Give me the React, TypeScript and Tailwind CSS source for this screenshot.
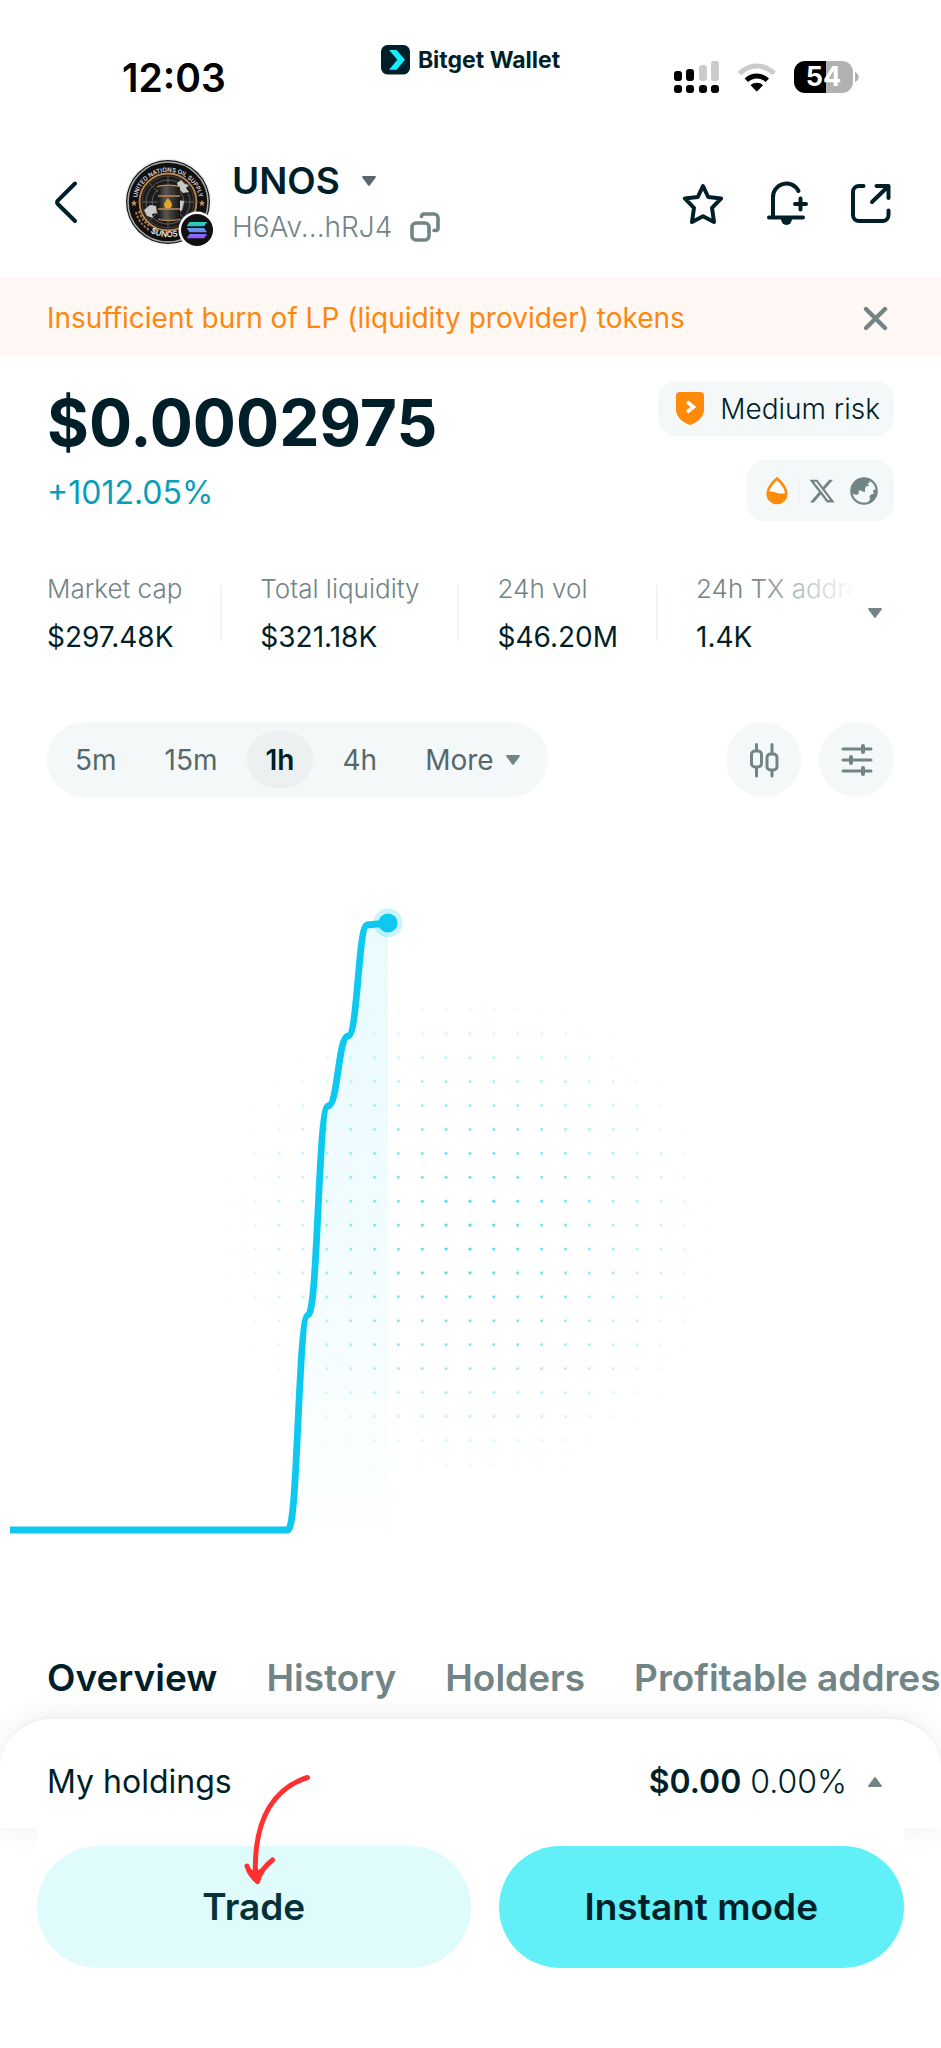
import { useState } from 'react';
import { FaXTwitter } from 'react-icons/fa6';

const stats = [
  { label: 'Market cap', value: '$297.48K' },
  { label: 'Total liquidity', value: '$321.18K' },
  { label: '24h vol', value: '$46.20M' },
  { label: '24h TX addresses', value: '1.4K' },
];

const timeframes = ['5m', '15m', '1h', '4h'];
const tabs = ['Overview', 'History', 'Holders', 'Profitable addresses'];

const Caret = ({ up = false, className = '' }: { up?: boolean; className?: string }) => (
  <svg
    width="14"
    height="10"
    viewBox="0 0 14 10"
    className={`shrink-0 fill-current ${up ? 'rotate-180' : ''} ${className}`}
  >
    <path d="M1 0h12c.8 0 1.200.8.7 1.400L7.800 9.400c-.4.600-1.200.600-1.600 0L.3 1.400C-.2.8.2 0 1 0z" />
  </svg>
);

const StatusBar = () => (
  <div className="grid h-[125px] grid-cols-[1fr_auto_1fr] items-start">
    <time className="pt-[54px] pl-[122px] text-[39px] leading-[48px] font-semibold text-black">12:03</time>
    <div className="flex items-center gap-2 pt-[45px]">
      <svg width="29" height="30" viewBox="0 0 29 30">
        <rect width="29" height="29.500" rx="6.500" fill="#001f29" />
        <path d="M8 5h7.500l8.500 9.800-8.500 9.900H8l8.400-9.900z" fill="#0ff0ff" />
      </svg>
      <span className="text-[23px] leading-[30px] font-bold text-[#001f29]">Bitget Wallet</span>
    </div>
    <div className="flex items-center justify-end gap-[17px] pt-[60px] pr-[82px]">
      <svg width="46" height="34" viewBox="0 0 46 34">
        <g fill="#000">
          <rect x="0" y="11" width="8" height="10" rx="3" />
          <rect x="12" y="9" width="8" height="12" rx="3" />
          <rect x="0" y="25" width="8" height="8" rx="3" />
          <rect x="12" y="25" width="8" height="8" rx="3" />
          <rect x="25" y="25" width="8" height="8" rx="3" />
          <rect x="37" y="25" width="8" height="8" rx="3" />
        </g>
        <g fill="#cbcbcb">
          <rect x="25" y="5" width="8" height="16" rx="3" />
          <rect x="37" y="1" width="8" height="20" rx="3" />
        </g>
      </svg>
      <svg width="40" height="32" viewBox="0 0 40 32" fill="none">
        <path d="M2.500 12.500C7.500 7.600 13.500 5 19.800 5s12.300 2.600 17.300 7.500" stroke="#cbcbcb" strokeWidth="5" />
        <path d="M9.300 19.300c3-2.900 6.600-4.400 10.500-4.400s7.500 1.500 10.500 4.400" stroke="#000" strokeWidth="5" />
        <path d="M13.600 24.200c3.600-3.200 8.800-3.200 12.400 0l-5.500 5.900c-.4.400-1 .4-1.400 0z" fill="#000" />
      </svg>
      <div className="flex items-center gap-[2px]">
        <div className="flex h-8 w-[59px] items-center justify-center rounded-[11px] bg-linear-to-r from-black from-55% to-[#b1b1b1] to-55% text-[27px] leading-8 font-bold text-white">
          54
        </div>
        <svg width="4" height="10" viewBox="0 0 4 10">
          <path d="M0 0c5 2 5 8 0 10z" fill="#b1b1b1" />
        </svg>
      </div>
    </div>
  </div>
);

const TokenLogo = () => (
  <svg width="94" height="90" viewBox="0 0 94 90" role="img" aria-label="UNOS">
    <defs>
      <path id="ring-top" d="M 13 51 A 31.500 31.500 0 1 1 75 51" />
      <path id="ring-bottom" d="M 20 70 A 36 36 0 0 0 68 70" />
      <linearGradient id="barrel" x1="0" x2="1" y1="0" y2="0">
        <stop offset="0" stopColor="#171717" />
        <stop offset=".35" stopColor="#5b5750" />
        <stop offset="1" stopColor="#161514" />
      </linearGradient>
      <linearGradient id="sol" gradientUnits="userSpaceOnUse" x1="73" x2="73" y1="81" y2="64">
        <stop offset="0" stopColor="#9a4dff" />
        <stop offset=".5" stopColor="#6d8df5" />
        <stop offset="1" stopColor="#18dcb4" />
      </linearGradient>
    </defs>
    <circle cx="44" cy="44" r="43.500" fill="#eef3f3" />
    <circle cx="44" cy="44" r="42" fill="#171717" />
    <circle cx="44" cy="44" r="40" fill="#101010" stroke="#a8a8a8" strokeWidth="1.500" />
    <circle cx="44" cy="44" r="28.500" fill="#1c1c1d" stroke="#b98a57" strokeWidth="1.800" />
    <circle cx="44" cy="44" r="26" fill="none" stroke="#4c3a28" strokeWidth="1" />
    <g stroke="#6c6c6c" strokeWidth=".8" fill="none">
      <circle cx="44" cy="44" r="22" />
      <circle cx="44" cy="44" r="16" />
      <path d="M44 18v52M18 44h52M25 25l38 38M63 25L25 63" />
    </g>
    <path d="M53 25l4-3 4 4 4 1-3 3 3 4-6 1-4-4zM20 52l6-5 6 1 1 7-5 1 1 4-6-2zM54 42l6 1-2 9-5 3z" fill="#c9c9c9" />
    <rect x="34" y="28" width="22" height="34" rx="2" fill="url(#barrel)" />
    <path d="M33 29c5-2.500 18-2.500 23 0M34 38h22M34 51h22M34 61c5 2 17 2 22 0" stroke="#b98a57" strokeWidth="1.300" fill="none" />
    <path d="M44 40c2 3 4 4.500 4 6.500a4 4 0 0 1-8 0c0-2 2-3.500 4-6.500z" fill="#e3a72c" />
    <path d="M12 54c2 8 6 13 13 18M15 53c2 7 6 12 12 16" stroke="#a9744b" strokeWidth="2" strokeDasharray="2.500 1.500" fill="none" />
    <path d="M10 42l1 2 2 .3-1.500 1.500.4 2.200-1.900-1-1.900 1 .4-2.200L7 44.300 9 44zM78 42l1 2 2 .3-1.500 1.500.4 2.200-1.900-1-1.900 1 .4-2.200-1.500-1.500 2-.3z" fill="#b98a57" />
    <text fill="#d9d9d9" fontSize="6" fontWeight="600">
      <textPath href="#ring-top" startOffset="50%" textAnchor="middle">UNITED NATIONS OIL SUPPLY</textPath>
    </text>
    <text fill="#e8e8e8" fontSize="8" fontWeight="600">
      <textPath href="#ring-bottom" startOffset="42%" textAnchor="middle">$UNOS</textPath>
    </text>
    <circle cx="73" cy="72" r="18.500" fill="#fff" />
    <circle cx="73" cy="72" r="16" fill="#111" />
    <g fill="url(#sol)">
      <path d="M65.500 64H83l-2.800 4.300H62.700z" />
      <path d="M62.700 70h17.500l2.800 4.300H65.500z" />
      <path d="M65.500 76H83l-2.800 4.300H62.700z" />
    </g>
  </svg>
);

const Header = () => (
  <header className="flex h-[152px] items-start pr-[50px] pl-[54px] text-[#001f29]">
    <button type="button" aria-label="Back" className="mt-[56px]">
      <svg width="24" height="43" viewBox="0 0 24 43" fill="none" stroke="currentColor" strokeWidth="4" strokeLinecap="round" strokeLinejoin="round">
        <path d="M21 2.500L3.800 19.600c-1 1-1 2.400 0 3.400L21 40" />
      </svg>
    </button>
    <div className="mt-[33px] ml-[46px]">
      <TokenLogo />
    </div>
    <div className="mt-[33px] ml-[14px]">
      <button type="button" className="flex h-[46px] items-center gap-[22px] text-[37px] leading-[46px] font-semibold">
        UNOS
        <Caret className="text-[#56686b]" />
      </button>
      <button type="button" className="flex h-[46px] items-center gap-[18px] text-[28px] leading-[46px] font-light text-[#718486]">
        H6Av...hRJ4
        <svg width="30" height="30" viewBox="0 0 30 30" fill="none" stroke="currentColor" strokeWidth="3.600" strokeLinecap="round" strokeLinejoin="round">
          <rect x="2" y="11" width="17" height="17" rx="4" />
          <path d="M11.500 4.500c0-1.500 1-2.500 2.500-2.500h10c2.200 0 4 1.800 4 4v10c0 1.500-1 2.500-2.500 2.500h-1.500" />
        </svg>
      </button>
    </div>
    <div className="mt-[55px] ml-auto flex items-center gap-[41px]">
      <button type="button" aria-label="Add to favourites">
        <svg width="44" height="46" viewBox="0 0 44 46" fill="none" stroke="currentColor" strokeWidth="4" strokeLinejoin="round">
          <path d="M22 6l5.200 11 13 1.400-9.200 9.400 2 14.200-11-5.700L11 42l2-14.200-9.200-9.400 13-1.400z" />
        </svg>
      </button>
      <button type="button" aria-label="Add price alert">
        <svg width="42" height="46" viewBox="0 0 42 46" fill="none" stroke="currentColor" strokeWidth="4" strokeLinecap="round">
          <path d="M3 37.500h34M7 37V18.500a13.500 13.500 0 0 1 25.500-7.500M34.500 18.500v11M29 24h11" />
          <path d="M15 39h11a5.500 6 0 0 1-11 0z" fill="currentColor" stroke="none" />
        </svg>
      </button>
      <button type="button" aria-label="Share">
        <svg width="42" height="46" viewBox="0 0 42 46" fill="none" stroke="currentColor" strokeWidth="4" strokeLinecap="round" strokeLinejoin="round">
          <path d="M14.500 6H10a6 6 0 0 0-6 6v23a6 6 0 0 0 6 6h23.500a6 6 0 0 0 6-6v-4.500M27.500 6h12v12M38.500 7L23 22" />
        </svg>
      </button>
    </div>
  </header>
);

const PriceSummary = () => (
  <section className="flex items-start justify-between pt-6 pr-[47px] pl-[47px]">
    <div>
      <h1 className="text-[64px] leading-[84px] font-bold text-[#001f29]">$0.0002975</h1>
      <p className="mt-1 text-[32px] leading-[48px] text-[#0a9dba]">+1012.05%</p>
    </div>
    <div className="flex flex-col items-end gap-6">
      <button type="button" className="flex h-[55px] items-center gap-4 rounded-[18px] bg-[#f4f8f9] pr-[14px] pl-[18px] text-[28px] font-light text-[#001f29]">
        <svg width="28" height="33" viewBox="0 0 28 33">
          <path d="M4 0h20a4 4 0 0 1 4 4v13.500C28 25 21.500 30.500 14 33 6.500 30.500 0 25 0 17.500V4a4 4 0 0 1 4-4z" fill="#fe8a0a" />
          <path d="M12.500 11l5 4-5 4" fill="none" stroke="#fff" strokeWidth="3.600" strokeLinecap="square" />
        </svg>
        Medium risk
      </button>
      <div className="flex h-[61px] items-center rounded-[18px] bg-[#f4f8f9] pr-4 pl-[19px] text-[#718486]">
        <button type="button" aria-label="Liquidity">
          <svg width="22" height="28" viewBox="0 0 22 28">
            <path d="M11 1.500c4.500 4 9.300 9.500 9.300 15.200a9.300 9.300 0 0 1-18.600 0C1.700 11 6.500 5.500 11 1.500z" fill="#fff" stroke="#fe8a0a" strokeWidth="2.600" />
            <path d="M1.700 15.500c4-2 6.500-.3 9.300.5s6 .7 9.300 0c.4 6-3.500 10.500-9.300 10.500S1.300 21.500 1.700 15.500z" fill="#fe8a0a" />
          </svg>
        </button>
        <span className="mr-2 ml-[10px] h-6 w-[2px] bg-[#eef2f3]" />
        <a href="#x" aria-label="X">
          <FaXTwitter className="size-7" />
        </a>
        <a href="#website" aria-label="Website" className="ml-[14px]">
          <svg width="28" height="28" viewBox="0 0 28 28">
            <circle cx="14" cy="14" r="12.700" fill="#f4f8f9" stroke="currentColor" strokeWidth="2.200" />
            <path d="M1.500 15C1 7 6.500 1 14 1c2 0 4 .3 5.500 1v4l-2 .5 1.500 2.500-3 .5-1 2v3.500l-2.500-.5-2-1.200-2 .7.500 2.500-2.500 1.500-3-1z" fill="currentColor" />
            <path d="M26.500 13l-2.500-.5-1 1.500 1 2.500-3 1-1.500 2 .5 3-2.500 3.700c5.500-.7 9.500-5.700 9-13.200z" fill="currentColor" />
          </svg>
        </a>
      </div>
    </div>
  </section>
);

const StatsRow = () => (
  <section className="mt-11 flex items-center pr-[59px] pl-[47px]">
    <div className="relative min-w-0 flex-1 overflow-hidden">
      <div className="flex items-center gap-[38px]">
        {stats.map((stat, i) => (
          <div key={stat.label} className="flex shrink-0 items-center gap-[38px]">
            {i > 0 && <span className="h-14 w-[2px] bg-[#eef3f3]" />}
            <div className="whitespace-nowrap">
              <p className="text-[26px] leading-[48px] font-light text-[#718486]">{stat.label}</p>
              <p className="text-[28px] leading-[48px] text-[#001f29]">{stat.value}</p>
            </div>
          </div>
        ))}
      </div>
      <div className="pointer-events-none absolute inset-y-0 right-0 w-[104px] bg-linear-to-r from-white/0 to-white" />
    </div>
    <button type="button" aria-label="Show all stats" className="ml-[12px] text-[#718486]">
      <Caret />
    </button>
  </section>
);

const ChartControls = () => {
  const [active, setActive] = useState('1h');

  return (
    <section className="mt-[61px] flex items-center justify-between px-[47px]">
      <div className="flex h-[75px] items-center gap-[10px] rounded-full bg-[#f4f8f9] px-[9px] text-[28px] text-[#56686b]">
        {timeframes.map((frame) => (
          <button
            key={frame}
            type="button"
            onClick={() => setActive(frame)}
            className={
              frame === active
                ? 'h-[57px] rounded-full bg-[#ecf0f1] px-[19px] font-semibold text-[#001f29]'
                : 'h-[57px] px-[19px]'
            }
          >
            {frame}
          </button>
        ))}
        <button type="button" className="flex h-[57px] items-center gap-3 px-[19px]">
          More
          <Caret className="text-[#718486]" />
        </button>
      </div>
      <div className="flex gap-[18px] text-[#718486]">
        <button type="button" aria-label="Candles" className="flex size-[75px] items-center justify-center rounded-full bg-[#f4f8f9]">
          <svg width="30" height="36" viewBox="0 0 30 36" fill="none" stroke="currentColor" strokeWidth="3" strokeLinecap="round">
            <rect x="2.500" y="9" width="10" height="16" rx="3.500" />
            <rect x="18" y="12" width="10" height="16" rx="3.500" />
            <path d="M7.500 2.500V8M7.500 26v8M23 2.500V11M23 29v5" />
          </svg>
        </button>
        <button type="button" aria-label="Chart settings" className="flex size-[75px] items-center justify-center rounded-full bg-[#f4f8f9]">
          <svg width="32" height="34" viewBox="0 0 32 34" fill="none" stroke="currentColor" strokeWidth="3" strokeLinecap="round">
            <path d="M2 6h28M2 17h28M2 28h28" />
            <path d="M22 3v6M10 14v6M22 25v6" strokeWidth="4" />
          </svg>
        </button>
      </div>
    </section>
  );
};

const LINE =
  'M10 733H288C298 733 298 519 308 518C318 518 318 310 328 309C338 309 338 240 348 239C358 238 358 130 367 128L388 126';

const dots: { x: number; y: number; o: number }[] = [];
for (let row = -11; row <= 10; row++) {
  for (let col = -10; col <= 10; col++) {
    const d = Math.hypot(col, row + 0.5) / 10.8;
    if (d < 1) dots.push({ x: 470 + col * 23.87, y: 452 + row * 23.92, o: 1 - d });
  }
}

const PriceChart = () => (
  <svg viewBox="0 0 941 827" className="block h-auto w-full" role="img" aria-label="Price chart">
    <defs>
      <linearGradient id="area" x1="0" x2="0" y1="0" y2="1">
        <stop offset="0" stopColor="#5fe3f5" stopOpacity=".14" />
        <stop offset=".5" stopColor="#5fdcf5" stopOpacity=".08" />
        <stop offset="1" stopColor="#5fdcf5" stopOpacity="0" />
      </linearGradient>
    </defs>
    <path d={`${LINE}V776H10Z`} fill="url(#area)" />
    {dots.map((dot) => (
      <circle key={`${dot.x}-${dot.y}`} cx={dot.x} cy={dot.y} r="1.600" fill="#2fdcf2" opacity={dot.o} />
    ))}
    <path d={LINE} fill="none" stroke="#0fc8f0" strokeWidth="6.800" strokeLinejoin="round" />
    <circle cx="388" cy="126" r="14.500" fill="#0fc8f0" opacity=".22" />
    <circle cx="388" cy="126" r="9.500" fill="#0fc8f0" />
  </svg>
);

const HoldingsSheet = () => (
  <section className="relative">
    <div className="flex h-[112px] items-center justify-between rounded-t-[52px] border-t-3 border-[#eff3f3] bg-white pt-4 pr-[59px] pl-[47px] text-[32px] text-[#001f29] shadow-[0_0_30px_rgba(0,0,0,0.07)]">
      <span>My holdings</span>
      <button type="button" className="flex items-center gap-[21px]">
        <span>
          <span className="font-semibold">$0.00</span> <span className="font-light">0.00%</span>
        </span>
        <Caret up className="text-[#718486]" />
      </button>
    </div>
    <div className="relative mx-[37px] grid grid-cols-[433fr_405fr] gap-7 bg-white pt-[18px] pb-20 text-[37px] font-semibold">
      <button type="button" className="h-[122px] rounded-full bg-[#e0fbfb] text-[#04313a]">
        Trade
      </button>
      <button type="button" className="h-[122px] rounded-full bg-[#61eff8] text-[#001f29]">
        Instant mode
      </button>
    </div>
    <svg width="70" height="112" viewBox="0 0 70 112" className="pointer-events-none absolute top-[57px] left-[242px]" fill="none" stroke="#ff3030" strokeLinecap="round" strokeLinejoin="round">
      <path d="M65.500 4.500C35 14 11 42 13.500 104" strokeWidth="5" />
      <path d="M5 93c2 6 6 12 10.500 15.500C18 99 24 92 30.500 87" strokeWidth="5" />
      <path d="M9 98l6 11 5-12-5 2z" fill="#ff3030" strokeWidth="3" />
    </svg>
  </section>
);

export default function App() {
  return (
    <main className="min-h-screen overflow-hidden bg-white font-[Inter,'Liberation_Sans',sans-serif]">
      <StatusBar />
      <Header />
      <div className="flex h-20 items-center justify-between bg-[#fff8f4] pt-[2px] pr-[53px] pl-[47px]">
        <p className="text-[28px] text-[#ff860d]">Insufficient burn of LP (liquidity provider) tokens</p>
        <button type="button" aria-label="Dismiss" className="text-[#718486]">
          <svg width="25" height="25" viewBox="0 0 25 25" stroke="currentColor" strokeWidth="4.400" strokeLinecap="round">
            <path d="M3 3l19 19M22 3L3 22" />
          </svg>
        </button>
      </div>
      <PriceSummary />
      <StatsRow />
      <ChartControls />
      <PriceChart />
      <nav className="flex h-[92px] items-center gap-[49px] pt-4 pl-[47px] text-[37px] font-semibold whitespace-nowrap text-[#718486]">
        {tabs.map((tab, i) => (
          <a key={tab} href={`#${tab.toLowerCase().replace(' ', '-')}`} className={i === 0 ? 'text-[#001f29]' : ''}>
            {tab}
          </a>
        ))}
      </nav>
      <HoldingsSheet />
    </main>
  );
}
